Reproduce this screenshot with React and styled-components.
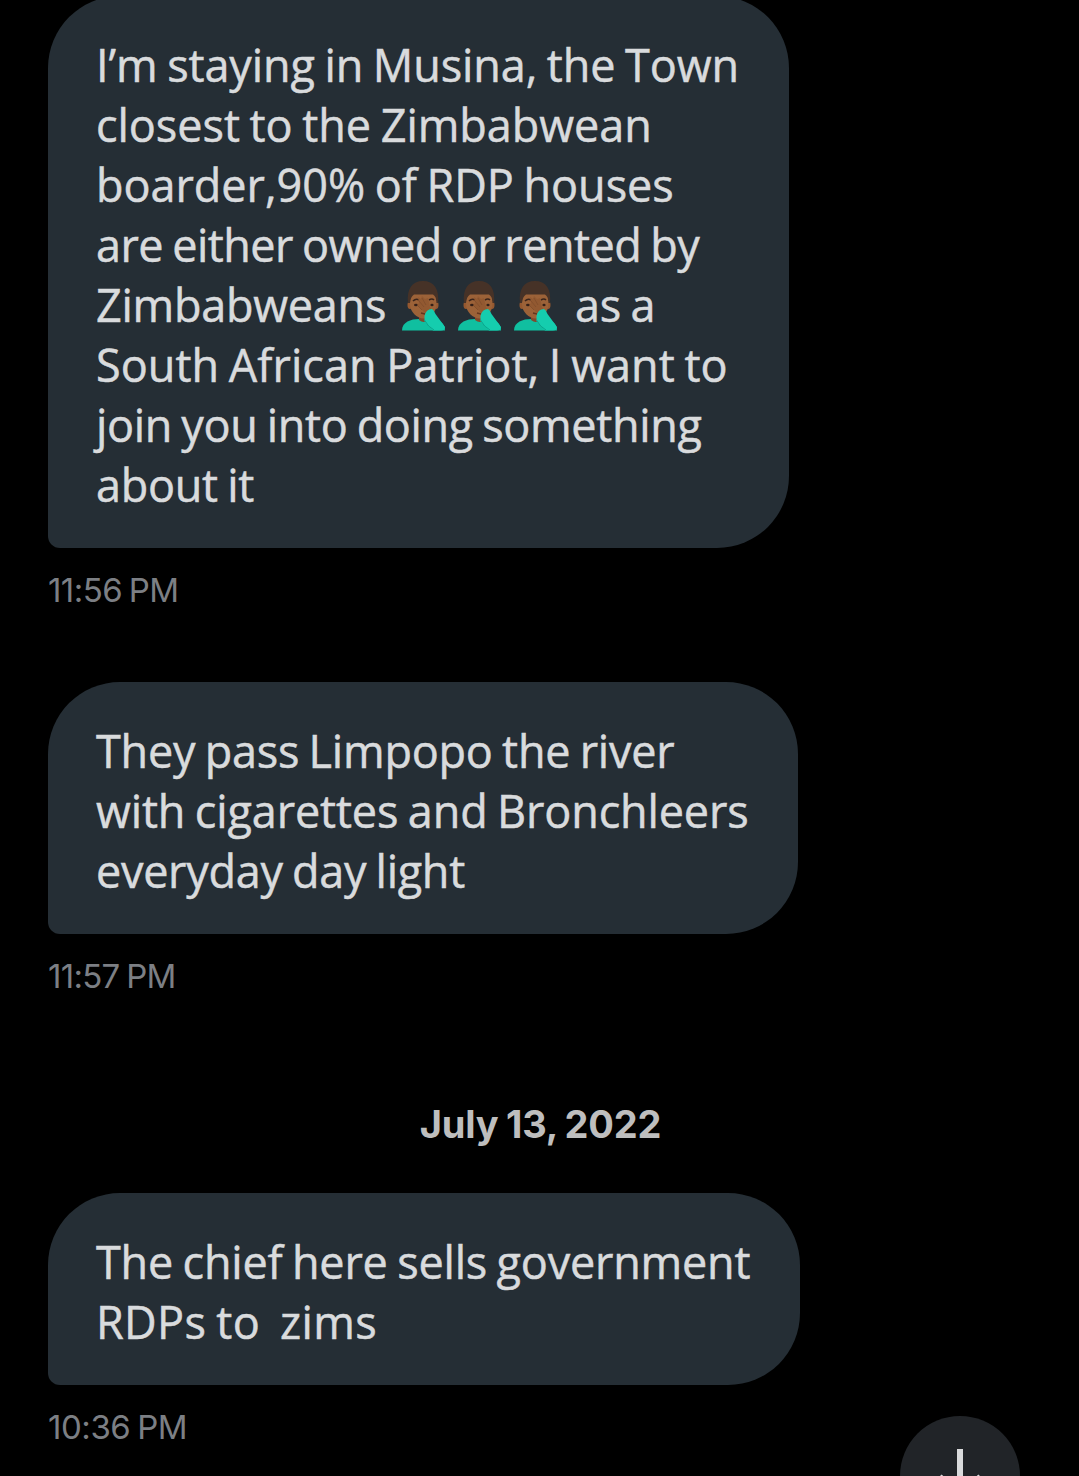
import React from "react"
import styled, { createGlobalStyle } from "styled-components";

const GlobalStyle = createGlobalStyle`
  * {
    box-sizing: border-box;
  }

  body {
    margin: 0;
    background: #000000;
    font-family: "Open Sans", "Noto Sans", sans-serif;
  }
`;

const Screen = styled.main`
  position: relative;
  display: flex;
  flex-direction: column;
  align-items: flex-start;
  height: 1476px;
  padding: 0 48px;
  overflow: hidden;
  background: #000000;
`;

const Message = styled.article`
  display: flex;
  flex-direction: column;
  align-items: flex-start;
  flex-shrink: 0;
  margin-top: ${props => props.$gap}px;
`;

const Bubble = styled.div`
  width: ${props => props.$width}px;
  padding: 39px 48px 33px;
  border-radius: 72px 72px 72px 12px;
  background: #252e35;
  color: #d9dbdd;
  font-size: 45px;
  line-height: 60px;
  word-spacing: ${props => props.$wordGap || -2}px;
  -webkit-text-stroke: 0.5px #d9dbdd;
`;

const Line = styled.div`
  display: flex;
  height: 60px;
  white-space: pre;
  letter-spacing: ${props => props.$track || 0}px;
`;

const Time = styled.time`
  height: 48px;
  margin-top: 18px;
  color: #7c7f84;
  font-family: Inter, sans-serif;
  font-size: 33px;
  line-height: 48px;
  letter-spacing: ${props => props.$track || 0}px;
  word-spacing: -2px;
`;

const DateHeading = styled.h2`
  align-self: center;
  flex-shrink: 0;
  height: 54px;
  margin: 97px 0 -1px;
  padding-left: 2px;
  color: #bebebe;
  font-family: Inter, sans-serif;
  font-size: 38px;
  font-weight: 700;
  line-height: 54px;
  letter-spacing: -0.2px;
  word-spacing: -1.3px;
`;

const EmojiGroup = styled.span`
  display: flex;
  gap: 12px;
  padding: 6px 17px 0 16px;
`;

const EmojiSvg = styled.svg`
  width: 44px;
  height: 50px;
`;

const ScrollButton = styled.button`
  position: absolute;
  left: 900px;
  top: 1416px;
  width: 120px;
  height: 120px;
  padding: 0;
  border: 0;
  border-radius: 50%;
  background: #212428;
`;

const Facepalm = () => (
    <EmojiSvg viewBox="0 0 44 50" role="img" aria-label="man facepalming">
        <path d="M0 49.500C0 41 9 38 17 38H28C37 38 43 42 43 49.500Z" fill="#10bfa0" />
        <path d="M17 33H26V39Q22 43 17 39Z" fill="#80492c" />
        <ellipse cx="8" cy="24" rx="2.500" ry="4" fill="#96582f" />
        <ellipse cx="34" cy="24" rx="2.500" ry="4" fill="#96582f" />
        <path d="M8 12Q8 7 21.500 7T34.500 12V23C34.500 31 28 37.500 21.500 37.500S8 31 8 23Z" fill="#9c6238" />
        <path d="M6 22C4.500 8 10 0 21 0S37.500 8 36 22L34.500 22C34.500 18 33.500 15 31 13.500H12C9.500 15 8.500 18 8 22Z" fill="#463227" />
        <path d="M11 20Q14 17 17 19M27 19Q30 17 32 19" fill="none" stroke="#3b251c" strokeWidth="1.600" />
        <ellipse cx="14" cy="24" rx="2" ry="1.300" fill="#352018" />
        <ellipse cx="30" cy="24" rx="1.600" ry="1.300" fill="#352018" />
        <path d="M19 32L23 33" stroke="#64351f" strokeWidth="1.500" />
        <path d="M15 24L17 22L16 16L19 18L20 15L23 18L26 17L28 26L30 29L25 34L20 29Z" fill="#925931" />
        <path d="M17 20L22 26M20 17L24 24M16 25L20 29" fill="none" stroke="#7c4a29" strokeWidth="0.700" />
        <path d="M22.500 35Q24 28 30 28Q32 29 33.500 33L43 46Q43 49.500 39 49.500H31Q26 45 22.500 40Z" fill="#15cdae" />
        <path d="M22.500 39Q26 46 32 49" fill="none" stroke="#0ba58c" />
    </EmojiSvg>
)

const DownArrow = () => (
    <svg width="120" height="120" viewBox="0 0 120 120" fill="none" stroke="#d9dadc" strokeWidth="6">
        <path d="M60 33V82M39.500 60.500L60 81L80.500 60.500" />
    </svg>
)

const messages = [
    {
        time: "11:56 PM", track: -0.57, gap: -4, width: 741, lines: [
            { text: "I’m staying in Musina, the Town", track: -0.1 },
            { text: "closest to the Zimbabwean", track: -0.04 },
            { text: "boarder,90% of RDP houses", track: -0.04 },
            { text: "are either owned or rented by", track: -0.54 },
            { text: "Zimbabweans", emojis: 3, after: "as a", track: -0.27 },
            { text: "South African Patriot, I want to", track: 0.03 },
            { text: "join you into doing something", track: -0.36 },
            { text: "about it", track: -0.28 }
        ]
    },
    {
        time: "11:57 PM", track: -0.7, gap: 68, width: 750, lines: [
            { text: "They pass Limpopo the river", track: -0.24 },
            { text: "with cigarettes and Bronchleers", track: -0.14 },
            { text: "everyday day light", track: -0.3 }
        ]
    },
    {
        time: "10:36 PM", track: -0.45, gap: 43, width: 752, date: "July 13, 2022", lines: [
            { text: "The chief here sells government", track: -0.2 },
            { text: "RDPs to  zims", track: 0.33 }
        ]
    }
]

const App = () => (
    <Screen>
        <GlobalStyle />
        { messages.map((message) => (
            <React.Fragment key={message.time}>
                { message.date && <DateHeading>{message.date}</DateHeading> }
                <Message $gap={message.gap}>
                    <Bubble $width={message.width}>
                        { message.lines.map((line) => (
                            <Line key={line.text} $track={line.track}>
                                <span>{line.text}</span>
                                { line.emojis && (
                                    <EmojiGroup>
                                        { Array.from({ length: line.emojis }, (_, i) => <Facepalm key={i} />) }
                                    </EmojiGroup>
                                ) }
                                { line.after && <span>{line.after}</span> }
                            </Line>
                        )) }
                    </Bubble>
                    <Time $track={message.track}>{message.time}</Time>
                </Message>
            </React.Fragment>
        )) }
        <ScrollButton aria-label="Scroll to latest">
            <DownArrow />
        </ScrollButton>
    </Screen>
)

export default App
